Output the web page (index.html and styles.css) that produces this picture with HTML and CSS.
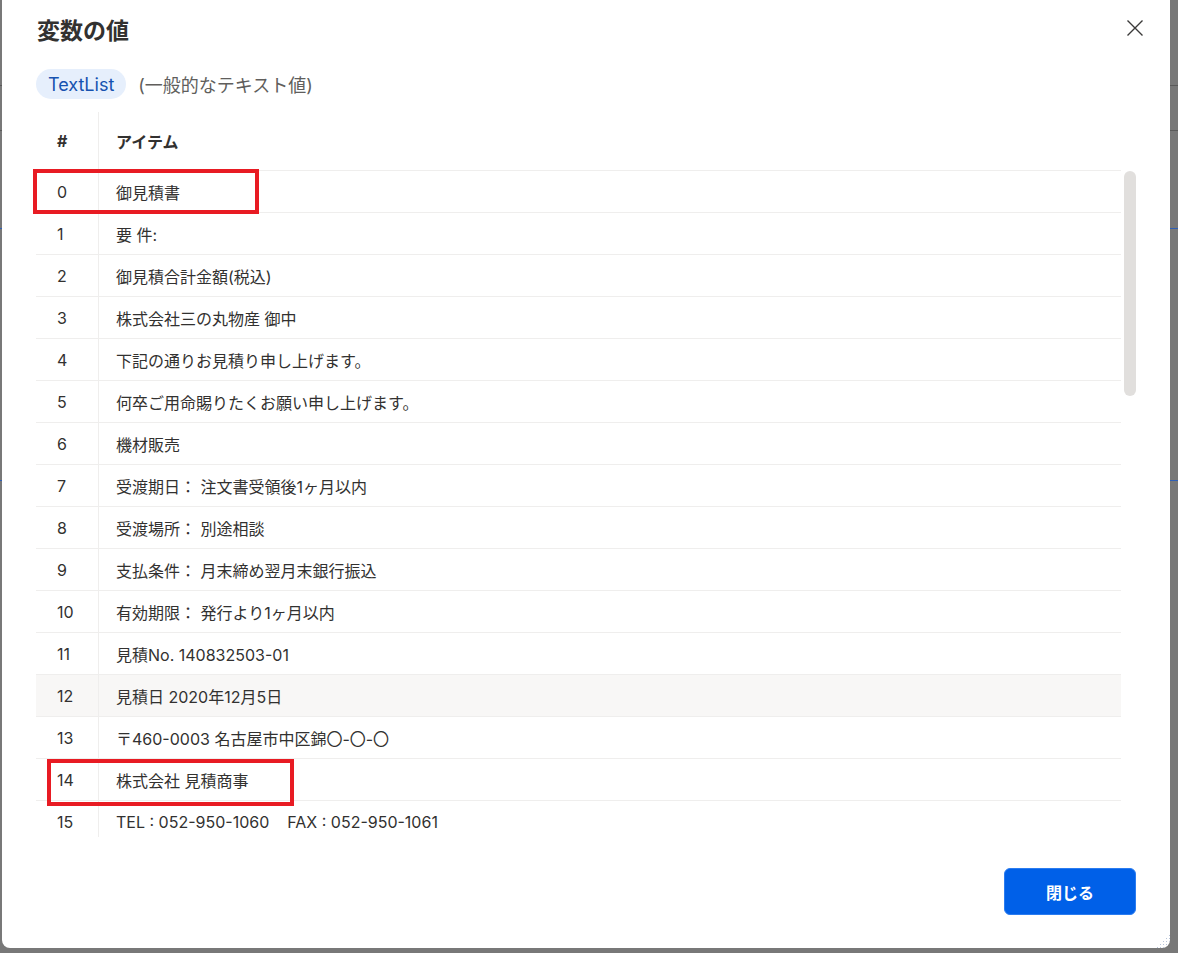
FILE: index.html
```html
<!DOCTYPE html>
<html lang="ja">
<head>
    <meta charset="UTF-8">
    <title>変数の値</title>
    <link rel="stylesheet" href="styles.css">
</head>
<body>
    <div class="backdrop">
        <div class="dialog">
            <div class="title-bar">
                <h1>変数の値</h1>
                <button class="close" aria-label="閉じる">
                    <svg width="16" height="16" viewBox="0 0 16 16">
                        <path d="M0.5 0.5 L15.5 15.5 M15.5 0.5 L0.5 15.5" stroke="#3b3a39" stroke-width="1.4" fill="none"/>
                    </svg>
                </button>
            </div>

            <div class="type-row">
                <span class="chip">TextList</span>
                <span class="type-desc">(一般的なテキスト値)</span>
            </div>

            <div class="table">
                <div class="row head">
                    <div class="cell num">#</div>
                    <div class="cell item">アイテム</div>
                </div>
                <div class="body">
                    <div class="row"><div class="cell num">0</div><div class="cell item">御見積書</div></div>
                    <div class="row"><div class="cell num">1</div><div class="cell item">要 件:</div></div>
                    <div class="row"><div class="cell num">2</div><div class="cell item">御見積合計金額(税込)</div></div>
                    <div class="row"><div class="cell num">3</div><div class="cell item">株式会社三の丸物産 御中</div></div>
                    <div class="row"><div class="cell num">4</div><div class="cell item">下記の通りお見積り申し上げます。</div></div>
                    <div class="row"><div class="cell num">5</div><div class="cell item">何卒ご用命賜りたくお願い申し上げます。</div></div>
                    <div class="row"><div class="cell num">6</div><div class="cell item">機材販売</div></div>
                    <div class="row"><div class="cell num">7</div><div class="cell item">受渡期日： 注文書受領後1ヶ月以内</div></div>
                    <div class="row"><div class="cell num">8</div><div class="cell item">受渡場所： 別途相談</div></div>
                    <div class="row"><div class="cell num">9</div><div class="cell item">支払条件： 月末締め翌月末銀行振込</div></div>
                    <div class="row"><div class="cell num">10</div><div class="cell item">有効期限： 発行より1ヶ月以内</div></div>
                    <div class="row"><div class="cell num">11</div><div class="cell item">見積No. 140832503-01</div></div>
                    <div class="row hover"><div class="cell num">12</div><div class="cell item">見積日 2020年12月5日</div></div>
                    <div class="row"><div class="cell num">13</div><div class="cell item">〒460-0003 名古屋市中区錦〇-〇-〇</div></div>
                    <div class="row"><div class="cell num">14</div><div class="cell item">株式会社 見積商事</div></div>
                    <div class="row"><div class="cell num">15</div><div class="cell item">TEL : 052-950-1060&nbsp;&nbsp;&nbsp;&nbsp;FAX : 052-950-1061</div></div>
                </div>
                <div class="scroll-thumb"></div>
            </div>

            <div class="footer">
                <button class="primary">閉じる</button>
            </div>

            <div class="mark mark-a"></div>
            <div class="mark mark-b"></div>
            <div class="grip"></div>
        </div>
    </div>
</body>
</html>
```

FILE: styles.css
```css
* {
    margin: 0;
    padding: 0;
    box-sizing: border-box;
}
body {
    font-family: Inter, "Noto Sans CJK JP", sans-serif;
    color: #323130;
    background: #777777;
    overflow: hidden;
}
.backdrop {
    width: 1178px;
    height: 953px;
    padding-left: 2px;
    background:
        linear-gradient(#5a5a5a, #5a5a5a) 0 85px / 100% 1px no-repeat,
        linear-gradient(#5a5a5a, #5a5a5a) 0 130px / 100% 1px no-repeat,
        linear-gradient(#2f5fb5, #2f5fb5) 0 228px / 100% 1px no-repeat,
        linear-gradient(#2f5fb5, #2f5fb5) 0 480px / 100% 1px no-repeat,
        #787878;
}
.dialog {
    position: relative;
    width: 1168px;
    height: 948px;
    background: #ffffff;
    border-radius: 0 0 8px 8px;
    padding: 0 34px;
    display: flex;
    flex-direction: column;
}
.title-bar {
    height: 58px;
    display: flex;
    align-items: center;
    justify-content: space-between;
}
.title-bar h1 {
    font-family: "Noto Sans CJK JP", sans-serif;
    font-size: 23px;
    font-weight: 600;
    color: #323130;
    margin-left: 1px;
}
.close {
    border: none;
    background: none;
    width: 24px;
    height: 24px;
    display: flex;
    align-items: center;
    justify-content: center;
    margin-right: -11px;
    margin-top: -2px;
}
.type-row {
    margin-top: 11px;
    height: 30px;
    display: flex;
    align-items: center;
    gap: 12px;
}
.chip {
    height: 30px;
    padding: 0 12px;
    border-radius: 15px;
    background: #e6effc;
    color: #1652b0;
    font-size: 18px;
    display: flex;
    align-items: center;
}
.type-desc {
    font-size: 18px;
    color: #605e5c;
}
.table {
    position: relative;
    margin-top: 13px;
    height: 725px;
    padding-right: 15px;
    display: flex;
    flex-direction: column;
}
.body {
    flex: 1;
    overflow: hidden;
}
.row {
    display: flex;
    height: 42px;
    border-top: 1px solid #efeeed;
    font-size: 16px;
}
.row.head {
    height: 58px;
    border-top: none;
    font-weight: 700;
}
.row.hover {
    background: #f8f7f6;
}
.cell {
    display: flex;
    align-items: center;
}
.cell.num {
    width: 63px;
    padding-left: 21px;
    border-right: 1px solid #efeeed;
}
.cell.item {
    flex: 1;
    padding-left: 17px;
}
.scroll-thumb {
    position: absolute;
    right: 0;
    top: 59px;
    width: 12px;
    height: 225px;
    border-radius: 6px;
    background: #e1dfdd;
}
.footer {
    flex: 1;
    display: flex;
    justify-content: flex-end;
    align-items: flex-start;
    padding-top: 31px;
}
.primary {
    width: 132px;
    height: 47px;
    border: 1px solid #2b7cf0;
    border-radius: 6px;
    background: #0060e8;
    color: #ffffff;
    font-family: "Noto Sans CJK JP", sans-serif;
    font-size: 16px;
    font-weight: 700;
}
.mark {
    position: absolute;
    border: 4px solid #e81b23;
}
.mark-a {
    left: 31px;
    top: 169px;
    width: 226px;
    height: 45px;
}
.mark-b {
    left: 45px;
    top: 759px;
    width: 247px;
    height: 47px;
}
.grip {
    position: absolute;
    right: 0;
    bottom: 0;
    width: 14px;
    height: 14px;
    background: radial-gradient(circle, #b8c4d8 0.8px, transparent 1px) 0 0 / 3px 3px;
    clip-path: polygon(100% 0, 100% 100%, 0 100%);
    border-bottom-right-radius: 8px;
}
```
